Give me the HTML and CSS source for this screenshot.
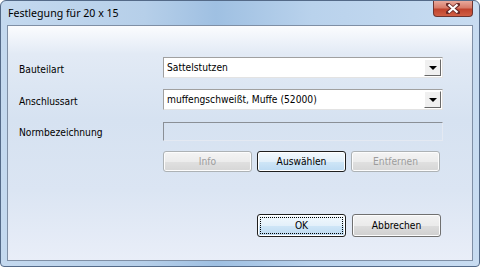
FILE: index.html
```html
<!DOCTYPE html>
<html>
<head>
  <meta name="viewport" content="width=device-width, initial-scale=1.0">
  <link rel="stylesheet" href="styles.css">
</head>
<body>
  <!-- VENTANA -->
  <div class="ventana">
    <div class="titulo">
      <span class="titulo-texto">Festlegung für 20 x 15</span>
      <div class="cerrar">
        <svg width="14" height="11" viewBox="0 0 14 11">
          <path d="M2 1.5 L12 9.5 M12 1.5 L2 9.5" stroke="#6b2a28" stroke-width="4" stroke-linecap="square"/>
          <path d="M2.5 1.5 L11.5 9.5 M11.5 1.5 L2.5 9.5" stroke="#ffffff" stroke-width="2.2"/>
        </svg>
      </div>
    </div>

    <div class="cliente">
      <div class="formulario">
        <label class="etiqueta">Bauteilart</label>
        <div class="combo">
          <span class="combo-texto">Sattelstutzen</span>
          <span class="flecha"><i></i></span>
        </div>

        <label class="etiqueta">Anschlussart</label>
        <div class="combo">
          <span class="combo-texto">muffengschweißt, Muffe (52000)</span>
          <span class="flecha"><i></i></span>
        </div>

        <label class="etiqueta">Normbezeichnung</label>
        <div class="campo"></div>

        <span></span>
        <div class="botones">
          <button class="boton" disabled>Info</button>
          <button class="boton activo">Auswählen</button>
          <button class="boton" disabled>Entfernen</button>
        </div>
      </div>

      <div class="pie">
        <button class="boton activo foco"><span>OK</span></button>
        <button class="boton">Abbrechen</button>
      </div>
    </div>
  </div>
</body>
</html>
```

FILE: styles.css
```css
/* GENERAL */
body {
  margin: 0;
  width: 480px;
  height: 267px;
  overflow: hidden;
  background: #ffffff;
  font-family: "DejaVu Sans Condensed", "DejaVu Sans", sans-serif;
  font-size: 10.2px;
}

/* VENTANA */
.ventana {
  box-sizing: border-box;
  width: 480px;
  height: 267px;
  border: 1px solid #546a88;
  border-radius: 6px 6px 4px 4px;
  background: linear-gradient(90deg, #c4d9ef 0%, #b6cfe9 30%, #9fc0e2 45%, #b9d2ec 65%, #c8dcf1 100%);
  padding: 0 6px 5px 6px;
}

.titulo {
  display: flex;
  align-items: flex-start;
  height: 24px;
}

.titulo-texto {
  font-family: "Noto Sans", sans-serif;
  font-size: 10.6px;
  color: #000000;
  padding: 5px 0 0 1px;
}

.cerrar {
  margin-left: auto;
  width: 40px;
  height: 16px;
  box-sizing: border-box;
  border: 1px solid #6d3430;
  border-top: none;
  border-radius: 0 0 4px 4px;
  background: linear-gradient(#e8a99c 0%, #d77b69 45%, #c0432d 55%, #d05f45 100%);
  display: flex;
  justify-content: center;
  align-items: center;
}

/* AREA CLIENTE */
.cliente {
  box-sizing: border-box;
  height: 236px;
  border: 1px solid #7f8fa5;
  background: linear-gradient(#fbfcfe 0%, #e2eaf5 12%, #d6e2f1 40%, #dbe5f3 70%, #e9eef8 100%);
  padding: 31px 0 0 11px;
}

.formulario {
  display: grid;
  grid-template-columns: 144px 280px;
  grid-template-rows: 21px 21px 19px 21px;
  row-gap: 11px;
  align-items: center;
}

.formulario .campo { margin-top: 2px; }
.formulario .botones { margin-top: -1px; }

.etiqueta {
  color: #000000;
  padding-top: 3px;
}

/* COMBO */
.combo {
  box-sizing: border-box;
  height: 21px;
  display: flex;
  align-items: center;
  background: #ffffff;
  border: 1px solid;
  border-color: #a0a0a0 #e3e3e3 #e3e3e3 #a0a0a0;
  padding: 1px;
}

.combo-texto {
  flex: 1;
  padding-left: 2px;
}

.flecha {
  box-sizing: border-box;
  width: 17px;
  height: 17px;
  background: #f0f0f0;
  border: 1px solid;
  border-color: #ffffff #696969 #696969 #ffffff;
  display: flex;
  justify-content: center;
  align-items: center;
}

.flecha i {
  width: 0;
  height: 0;
  border-left: 4px solid transparent;
  border-right: 4px solid transparent;
  border-top: 4px solid #000000;
  margin-top: 1px;
}

.campo {
  box-sizing: border-box;
  height: 19px;
  border: 1px solid;
  border-color: #8a8f96 #e4e9f2 #e4e9f2 #8a8f96;
}

/* BOTONES */
.botones {
  display: flex;
  gap: 5px;
}

.boton {
  box-sizing: border-box;
  width: 89px;
  height: 21px;
  padding: 0;
  font-family: inherit;
  font-size: inherit;
  color: #000000;
  border: 1px solid #707070;
  border-radius: 3px;
  background: linear-gradient(#f2f2f2 0%, #ebebeb 50%, #dddddd 51%, #cfcfcf 100%);
  box-shadow: inset 0 0 0 1px #fcfcfc;
}

.boton:disabled {
  color: #9c9c9c;
  border-color: #adb2b5;
  background: linear-gradient(#f4f4f4 0%, #ececec 50%, #e0e0e0 51%, #d6d6d6 100%);
}

.boton.activo {
  border-color: #1f1f1f;
  background: linear-gradient(#f3f9fd 0%, #e3f0fa 50%, #cfe6f7 51%, #bcdaf2 100%);
  box-shadow: inset 0 0 0 1px #ffffff;
}

.pie {
  display: flex;
  gap: 6px;
  margin: 42px 0 0 238px;
}

.pie .boton {
  height: 23px;
}

.boton.foco span {
  display: flex;
  justify-content: center;
  align-items: center;
  margin: 2px;
  height: 15px;
  border: 1px dotted #000000;
}
```
